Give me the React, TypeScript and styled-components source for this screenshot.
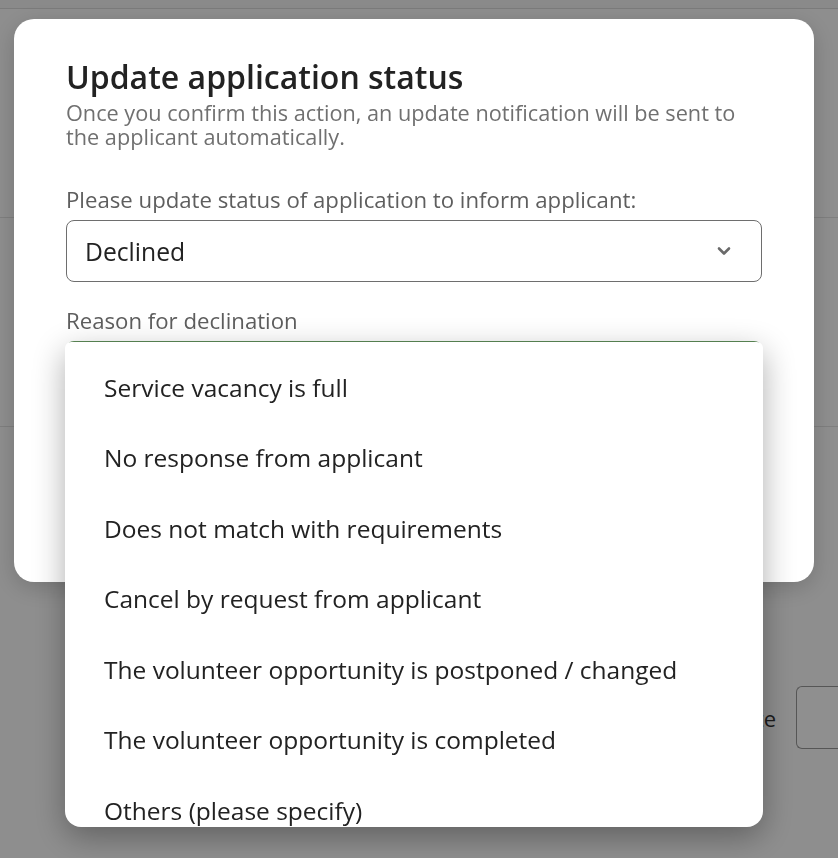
import React from "react";
import styled, { createGlobalStyle } from "styled-components";

const GlobalStyle = createGlobalStyle`
  html, body {
    margin: 0;
    padding: 0;
    overflow: hidden;
    background: #ffffff;
    font-family: "Open Sans", Lato, sans-serif;
  }
`;

const Page = styled.div`
  width: 838px;
  height: 858px;
  overflow: hidden;
  background: #fdfdfd;
`;

const TopBar = styled.div`
  height: 8px;
  background: #f6f6f6;
  border-bottom: 1px solid #dcdcdc;
`;

const Section = styled.div<{ $height: number }>`
  height: ${({ $height }) => $height}px;
  border-bottom: 1px solid #e2e2e2;
`;

const FieldRow = styled.div`
  display: flex;
  align-items: center;
  justify-content: flex-end;
  gap: 20px;
  margin-top: 259px;
`;

const FieldLabel = styled.span`
  font-size: 22px;
  color: #333;
`;

const FieldBox = styled.div`
  width: 41px;
  height: 61px;
  border: 1px solid #999;
  border-right: none;
  border-radius: 6px 0 0 6px;
  background: #fff;
`;

const Overlay = styled.div`
  position: fixed;
  inset: 0;
  background: rgba(0, 0, 0, 0.44);
  padding: 19px 0 0 14px;
`;

const Modal = styled.div`
  position: relative;
  box-sizing: border-box;
  width: 800px;
  height: 563px;
  padding: 40px 52px;
  background: #fff;
  border-radius: 20px;
  box-shadow: 0 6px 24px rgba(0, 0, 0, 0.18);
`;

const Title = styled.h2`
  margin: 0;
  font-size: 32px;
  line-height: 36px;
  font-weight: 600;
  color: #222;
`;

const Subtitle = styled.p`
  margin: 6px 0 0;
  font-size: 21.7px;
  line-height: 24px;
  color: #707070;
`;

const Label = styled.div<{ $top: number }>`
  margin-top: ${({ $top }) => $top}px;
  font-size: 22.2px;
  line-height: 24px;
  color: #5e5e5e;
`;

const SelectBox = styled.div<{ $active?: boolean }>`
  position: relative;
  box-sizing: border-box;
  height: 62px;
  margin-top: 8px;
  padding: 0 30px 0 18px;
  display: flex;
  align-items: center;
  justify-content: space-between;
  border: ${({ $active }) => ($active ? "2px solid #5c8a57" : "1px solid #6e6e6e")};
  border-radius: 8px;
  font-size: 24.7px;
  color: #222;
`;

const Menu = styled.ul`
  position: absolute;
  z-index: 5;
  top: -1px;
  left: -3px;
  right: -3px;
  box-sizing: border-box;
  height: 485px;
  margin: 0;
  padding: 10px 0 0;
  list-style: none;
  background: #fff;
  border-radius: 6px 6px 16px 16px;
  box-shadow: 0 10px 32px rgba(0, 0, 0, 0.32);
  overflow: hidden;
`;

const MenuItem = styled.li`
  height: 70.5px;
  display: flex;
  align-items: center;
  padding-left: 39px;
  font-size: 24.5px;
  color: #222;
  white-space: nowrap;
`;

const Actions = styled.div`
  display: flex;
  justify-content: flex-end;
  gap: 16px;
  margin-top: 80px;
`;

const Button = styled.button`
  height: 48px;
  padding: 0 28px;
  border-radius: 8px;
  border: 1px solid #5c8a57;
  background: #5c8a57;
  color: #fff;
  font-size: 18px;
`;

const Chevron = () => (
  <svg width="14" height="10" viewBox="0 0 14 10">
    <polyline
      points="2,2.5 7,7.5 12,2.5"
      fill="none"
      stroke="#6a6a6a"
      strokeWidth="2.6"
      strokeLinecap="round"
      strokeLinejoin="round"
    />
  </svg>
);

const reasons = [
  "Service vacancy is full",
  "No response from applicant",
  "Does not match with requirements",
  "Cancel by request from applicant",
  "The volunteer opportunity is postponed / changed",
  "The volunteer opportunity is completed",
  "Others (please specify)",
];

export default function App() {
  return (
    <>
      <GlobalStyle />
      <Page>
        <TopBar />
        <Section $height={208} />
        <Section $height={208} />
        <FieldRow>
          <FieldLabel>Date</FieldLabel>
          <FieldBox />
        </FieldRow>
      </Page>
      <Overlay>
        <Modal>
          <Title>Update application status</Title>
          <Subtitle>
            Once you confirm this action, an update notification will be sent to
            the applicant automatically.
          </Subtitle>
          <Label $top={39}>Please update status of application to inform applicant:</Label>
          <SelectBox>
            <span>Declined</span>
            <Chevron />
          </SelectBox>
          <Label $top={27}>Reason for declination</Label>
          <SelectBox $active>
            <span />
            <Menu>
              {reasons.map((r) => (
                <MenuItem key={r}>{r}</MenuItem>
              ))}
            </Menu>
          </SelectBox>
          <Actions>
            <Button>Confirm</Button>
          </Actions>
        </Modal>
      </Overlay>
    </>
  );
}
